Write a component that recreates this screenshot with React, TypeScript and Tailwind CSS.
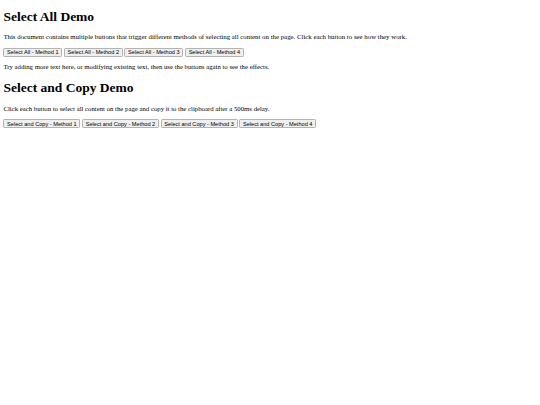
export default function App() {
  const serif = "font-['Liberation_Serif','Times_New_Roman',serif] text-black";
  const btn =
    "font-['Liberation_Sans',Arial,sans-serif] text-[5.625px] leading-[6.5px] h-[8.9px] px-[2.7px] bg-[#efefef] border border-[#b3b3b3] rounded-[1.2px] text-black whitespace-nowrap";

  return (
    <div className={`${serif} bg-white min-h-[405px] px-[3.4px] flex flex-col items-start`}>
      <h1 className="text-[13.5px] font-bold leading-[15.5px] mt-[9.05px]">Select All Demo</h1>
      <p className="text-[6.83px] leading-[7.8px] mt-[8.9px]">
        This document contains multiple buttons that trigger different methods of selecting all content on the page. Click each button to see how they work.
      </p>
      <div className="flex gap-[1.7px] mt-[6.75px]">
        <button className={btn}>Select All - Method 1</button>
        <button className={btn}>Select All - Method 2</button>
        <button className={btn}>Select All - Method 3</button>
        <button className={btn}>Select All - Method 4</button>
      </div>
      <p className="text-[6.75px] leading-[7.8px] mt-[6.5px]">
        Try adding more text here, or modifying existing text, then use the buttons again to see the effects.
      </p>
      <h1 className="text-[13.5px] font-bold leading-[15.5px] mt-[9.05px]">Select and Copy Demo</h1>
      <p className="text-[6.75px] leading-[7.8px] mt-[9.05px]">
        Click each button to select all content on the page and copy it to the clipboard after a 500ms delay.
      </p>
      <div className="flex gap-[1.7px] mt-[6.75px]">
        <button className={btn}>Select and Copy - Method 1</button>
        <button className={btn}>Select and Copy - Method 2</button>
        <button className={btn}>Select and Copy - Method 3</button>
        <button className={btn}>Select and Copy - Method 4</button>
      </div>
    </div>
  );
}
